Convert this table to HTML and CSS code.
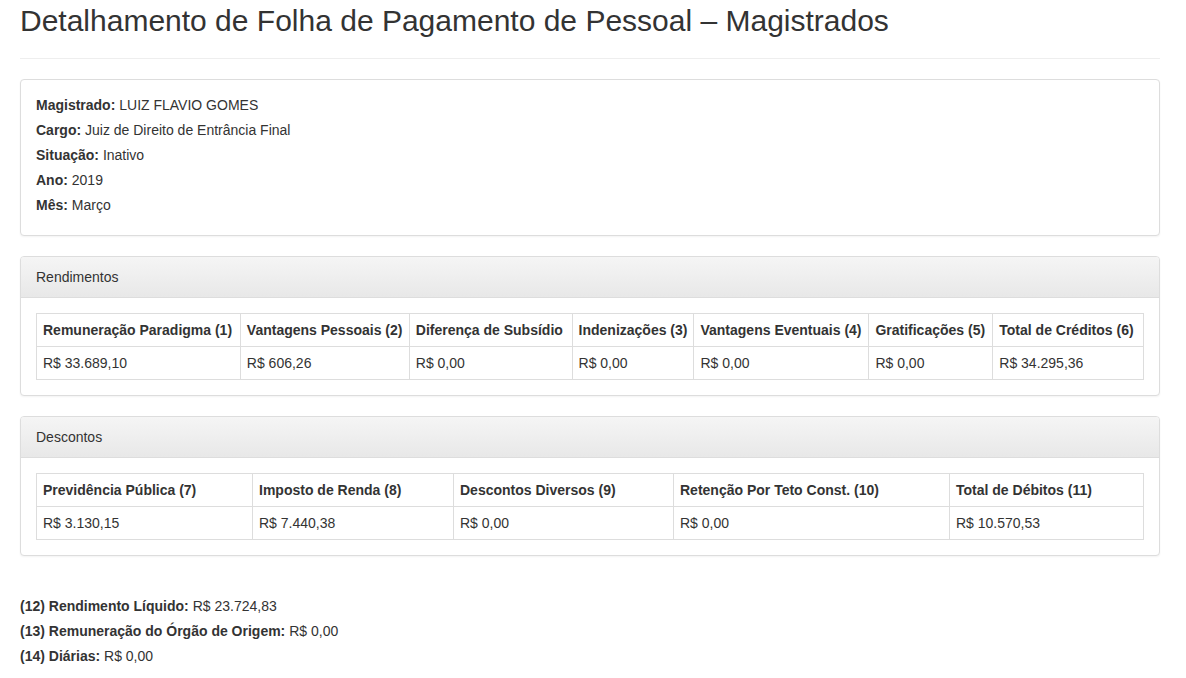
FILE: index.html
```html
<!DOCTYPE html>
<html lang="pt-BR">
<head>
    <meta charset="UTF-8">
    <meta name="viewport" content="width=device-width, initial-scale=1.0">
    <title>Detalhamento de Folha de Pagamento de Pessoal – Magistrados</title>
    <link rel="stylesheet" href="styles.css">
</head>
<body>
    <div class="container">
        <h1 class="page-header">Detalhamento de Folha de Pagamento de Pessoal – Magistrados</h1>

        <div class="panel">
            <div class="panel-body info">
                <p><strong>Magistrado:</strong> LUIZ FLAVIO GOMES</p>
                <p><strong>Cargo:</strong> Juiz de Direito de Entrância Final</p>
                <p><strong>Situação:</strong> Inativo</p>
                <p><strong>Ano:</strong> 2019</p>
                <p><strong>Mês:</strong> Março</p>
            </div>
        </div>

        <div class="panel">
            <div class="panel-heading">Rendimentos</div>
            <div class="panel-body">
                <table class="table rendimentos">
                    <tr>
                        <th>Remuneração Paradigma (1)</th>
                        <th>Vantagens Pessoais (2)</th>
                        <th>Diferença de Subsídio</th>
                        <th>Indenizações (3)</th>
                        <th>Vantagens Eventuais (4)</th>
                        <th>Gratificações (5)</th>
                        <th>Total de Créditos (6)</th>
                    </tr>
                    <tr>
                        <td>R$ 33.689,10</td>
                        <td>R$ 606,26</td>
                        <td>R$ 0,00</td>
                        <td>R$ 0,00</td>
                        <td>R$ 0,00</td>
                        <td>R$ 0,00</td>
                        <td>R$ 34.295,36</td>
                    </tr>
                </table>
            </div>
        </div>

        <div class="panel">
            <div class="panel-heading">Descontos</div>
            <div class="panel-body">
                <table class="table descontos">
                    <tr>
                        <th>Previdência Pública (7)</th>
                        <th>Imposto de Renda (8)</th>
                        <th>Descontos Diversos (9)</th>
                        <th>Retenção Por Teto Const. (10)</th>
                        <th>Total de Débitos (11)</th>
                    </tr>
                    <tr>
                        <td>R$ 3.130,15</td>
                        <td>R$ 7.440,38</td>
                        <td>R$ 0,00</td>
                        <td>R$ 0,00</td>
                        <td>R$ 10.570,53</td>
                    </tr>
                </table>
            </div>
        </div>

        <div class="summary">
            <p><strong>(12) Rendimento Líquido:</strong> R$ 23.724,83</p>
            <p><strong>(13) Remuneração do Órgão de Origem:</strong> R$ 0,00</p>
            <p><strong>(14) Diárias:</strong> R$ 0,00</p>
        </div>
    </div>
</body>
</html>
```

FILE: styles.css
```css
/* Basic Reset */
* {
    box-sizing: border-box;
    margin: 0;
    padding: 0;
}

body {
    font-family: "Liberation Sans", Arial, sans-serif;
    font-size: 14px;
    line-height: 20px;
    color: #333;
    background-color: #fff;
}

.container {
    width: 1140px;
    margin-left: 20px;
}

.page-header {
    font-size: 30px;
    font-weight: normal;
    line-height: 33px;
    padding-top: 4px;
    padding-bottom: 21px;
    border-bottom: 1px solid #eee;
    margin-bottom: 20px;
}

.panel {
    border: 1px solid #ddd;
    border-radius: 4px;
    box-shadow: 0 1px 2px rgba(0, 0, 0, 0.05);
    margin-bottom: 20px;
    background-color: #fff;
}

.panel-heading {
    padding: 10px 15px;
    border-bottom: 1px solid #ddd;
    border-radius: 3px 3px 0 0;
    background-image: linear-gradient(to bottom, #f5f5f5 0%, #e8e8e8 100%);
}

.panel-body {
    padding: 15px;
}

.info {
    padding-top: 13px;
    padding-bottom: 17px;
}

.info p,
.summary p {
    line-height: 25px;
}

.table {
    width: 100%;
    border-collapse: collapse;
}

.table th,
.table td {
    border: 1px solid #ddd;
    padding: 6px;
    text-align: left;
    vertical-align: top;
    line-height: 20px;
    white-space: nowrap;
}

.table th {
    font-weight: bold;
}

/* column widths */
.rendimentos th:nth-child(1) { width: 204px; }
.rendimentos th:nth-child(2) { width: 169px; }
.rendimentos th:nth-child(3) { width: 163px; }
.rendimentos th:nth-child(4) { width: 121px; }
.rendimentos th:nth-child(5) { width: 175px; }
.rendimentos th:nth-child(6) { width: 124px; }
.rendimentos th:nth-child(7) { width: 151px; }

.descontos th:nth-child(1) { width: 216px; }
.descontos th:nth-child(2) { width: 201px; }
.descontos th:nth-child(3) { width: 220px; }
.descontos th:nth-child(4) { width: 276px; }
.descontos th:nth-child(5) { width: 194px; }

.summary {
    padding-top: 18px;
}
```
